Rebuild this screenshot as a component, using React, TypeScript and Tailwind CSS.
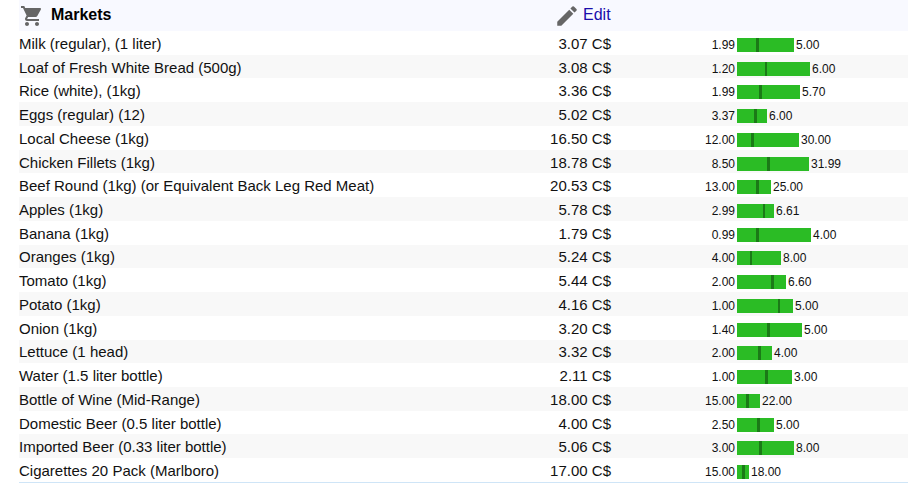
import React from "react";

type Row = { name: string; price: string; min: string; max: string; w: number; m: number; t?: number };

const rows: Row[] = [
  { name: "Milk (regular), (1 liter)", price: "3.07 C$", min: "1.99", max: "5.00", w: 57, m: 19 },
  { name: "Loaf of Fresh White Bread (500g)", price: "3.08 C$", min: "1.20", max: "6.00", w: 73, m: 28, t: 2 },
  { name: "Rice (white), (1kg)", price: "3.36 C$", min: "1.99", max: "5.70", w: 63, m: 22 },
  { name: "Eggs (regular) (12)", price: "5.02 C$", min: "3.37", max: "6.00", w: 30, m: 17 },
  { name: "Local Cheese (1kg)", price: "16.50 C$", min: "12.00", max: "30.00", w: 62, m: 14 },
  { name: "Chicken Fillets (1kg)", price: "18.78 C$", min: "8.50", max: "31.99", w: 72, m: 30 },
  { name: "Beef Round (1kg) (or Equivalent Back Leg Red Meat)", price: "20.53 C$", min: "13.00", max: "25.00", w: 34, m: 19 },
  { name: "Apples (1kg)", price: "5.78 C$", min: "2.99", max: "6.61", w: 37, m: 26, t: 2 },
  { name: "Banana (1kg)", price: "1.79 C$", min: "0.99", max: "4.00", w: 74, m: 19 },
  { name: "Oranges (1kg)", price: "5.24 C$", min: "4.00", max: "8.00", w: 44, m: 13, t: 2 },
  { name: "Tomato (1kg)", price: "5.44 C$", min: "2.00", max: "6.60", w: 49, m: 34 },
  { name: "Potato (1kg)", price: "4.16 C$", min: "1.00", max: "5.00", w: 56, m: 41, t: 2 },
  { name: "Onion (1kg)", price: "3.20 C$", min: "1.40", max: "5.00", w: 65, m: 30 },
  { name: "Lettuce (1 head)", price: "3.32 C$", min: "2.00", max: "4.00", w: 35, m: 21 },
  { name: "Water (1.5 liter bottle)", price: "2.11 C$", min: "1.00", max: "3.00", w: 55, m: 28 },
  { name: "Bottle of Wine (Mid-Range)", price: "18.00 C$", min: "15.00", max: "22.00", w: 23, m: 9 },
  { name: "Domestic Beer (0.5 liter bottle)", price: "4.00 C$", min: "2.50", max: "5.00", w: 37, m: 20 },
  { name: "Imported Beer (0.33 liter bottle)", price: "5.06 C$", min: "3.00", max: "8.00", w: 57, m: 22 },
  { name: "Cigarettes 20 Pack (Marlboro)", price: "17.00 C$", min: "15.00", max: "18.00", w: 12, m: 5 },
];

export default function App() {
  return (
    <div className="w-[908px] h-[486px] bg-white overflow-hidden pl-[19px] font-['Liberation_Sans',Arial,sans-serif] text-[#111]">
      <div className="flex h-[31px] items-center bg-[#f8f9ff]">
        <div className="flex w-[516px] items-center">
          <svg className="ml-[1px] h-[24px] w-[24px] shrink-0 text-[#666]" viewBox="0 0 24 24" fill="currentColor">
            <path d="M7 18c-1.1 0-1.99.9-1.99 2S5.9 22 7 22s2-.9 2-2-.9-2-2-2zM1 2v2h2l3.6 7.59-1.35 2.45c-.16.28-.25.61-.25.96 0 1.1.9 2 2 2h12v-2H7.42c-.14 0-.25-.11-.25-.25l.03-.12.9-1.63h7.45c.75 0 1.41-.41 1.75-1.03l3.58-6.49A1 1 0 0 0 20.01 4H5.21l-.94-2H1zm16 16c-1.1 0-1.99.9-1.99 2s.89 2 1.99 2 2-.9 2-2-.9-2-2-2z" />
          </svg>
          <span className="ml-[7px] pb-[2px] text-[16px] font-bold text-black">Markets</span>
        </div>
        <svg className="ml-[19px] h-[26px] w-[26px] shrink-0 text-[#666]" viewBox="0 0 24 24" fill="currentColor">
          <path d="M3 17.25V21h3.75L17.81 9.94l-3.75-3.75L3 17.25zM20.71 7.04a1 1 0 0 0 0-1.41l-2.34-2.34a1 1 0 0 0-1.41 0l-1.83 1.83 3.75 3.75 1.83-1.83z" />
        </svg>
        <span className="ml-[3px] pb-[2px] text-[16px] text-[#1a0dab]">Edit</span>
      </div>
      <div className="border-b border-[#cfe5f7]">
        {rows.map((r, i) => (
          <div key={r.name} className={`flex h-[23.74px] items-center text-[15px] leading-[18px] ${i % 2 ? "bg-[#f8f8f8]" : "bg-white"}`}>
            <div className="w-[475px] whitespace-nowrap pt-[2px]">{r.name}</div>
            <div className="w-[117px] text-right pt-[2px]">{r.price}</div>
            <div className="flex items-center pt-[4px]">
              <div className="w-[126px] pr-[2px] text-right text-[12px] leading-[14px]">{r.min}</div>
              <div className="relative h-[14px] bg-[#2bbc25]" style={{ width: r.w }}>
                <div className="absolute top-0 h-[14px] bg-[#1b7a17]" style={{ left: r.m, width: r.t ?? 3 }} />
              </div>
              <div className="pl-[2px] text-[12px] leading-[14px]">{r.max}</div>
            </div>
          </div>
        ))}
      </div>
    </div>
  );
}
